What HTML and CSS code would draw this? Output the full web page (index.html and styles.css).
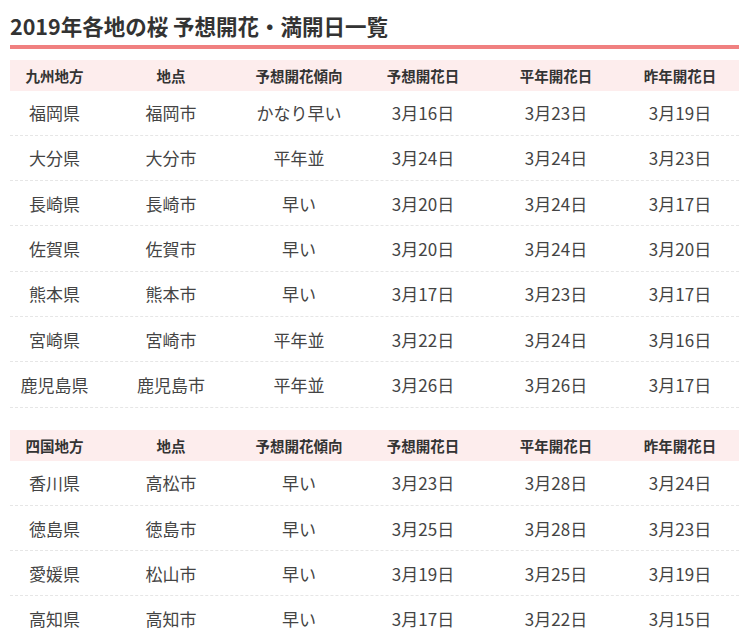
FILE: index.html
```html
<!DOCTYPE html>
<html lang="ja">
<head>
<meta charset="utf-8">
<link rel="stylesheet" href="styles.css">
</head>
<body>
<div class="page">
  <h2 class="title">2019年各地の桜 予想開花・満開日一覧</h2>

  <div class="grid">
    <div class="row head"><div>九州地方</div><div>地点</div><div>予想開花傾向</div><div>予想開花日</div><div>平年開花日</div><div>昨年開花日</div></div>
    <div class="row"><div>福岡県</div><div>福岡市</div><div>かなり早い</div><div>3月16日</div><div>3月23日</div><div>3月19日</div></div>
    <div class="row"><div>大分県</div><div>大分市</div><div>平年並</div><div>3月24日</div><div>3月24日</div><div>3月23日</div></div>
    <div class="row"><div>長崎県</div><div>長崎市</div><div>早い</div><div>3月20日</div><div>3月24日</div><div>3月17日</div></div>
    <div class="row"><div>佐賀県</div><div>佐賀市</div><div>早い</div><div>3月20日</div><div>3月24日</div><div>3月20日</div></div>
    <div class="row"><div>熊本県</div><div>熊本市</div><div>早い</div><div>3月17日</div><div>3月23日</div><div>3月17日</div></div>
    <div class="row"><div>宮崎県</div><div>宮崎市</div><div>平年並</div><div>3月22日</div><div>3月24日</div><div>3月16日</div></div>
    <div class="row"><div>鹿児島県</div><div>鹿児島市</div><div>平年並</div><div>3月26日</div><div>3月26日</div><div>3月17日</div></div>
  </div>

  <div class="grid second">
    <div class="row head"><div>四国地方</div><div>地点</div><div>予想開花傾向</div><div>予想開花日</div><div>平年開花日</div><div>昨年開花日</div></div>
    <div class="row"><div>香川県</div><div>高松市</div><div>早い</div><div>3月23日</div><div>3月28日</div><div>3月24日</div></div>
    <div class="row"><div>徳島県</div><div>徳島市</div><div>早い</div><div>3月25日</div><div>3月28日</div><div>3月23日</div></div>
    <div class="row"><div>愛媛県</div><div>松山市</div><div>早い</div><div>3月19日</div><div>3月25日</div><div>3月19日</div></div>
    <div class="row"><div>高知県</div><div>高知市</div><div>早い</div><div>3月17日</div><div>3月22日</div><div>3月15日</div></div>
  </div>
</div>
</body>
</html>
```
FILE: styles.css
```css
html, body {
  margin: 0;
  padding: 0;
  background: #fff;
}
body {
  font-family: "Noto Sans CJK JP", "Noto Sans", sans-serif;
  color: #444;
}
.page {
  width: 729px;
  padding-left: 10px;
  padding-top: 11px;
}
.title {
  margin: 0;
  font-size: 21.5px;
  line-height: 30px;
  font-weight: bold;
  color: #333;
  padding-bottom: 4px;
  border-bottom: 4px solid #f08080;
}
.grid {
  margin-top: 10.5px;
}
.grid.second {
  margin-top: 22px;
}
.row {
  display: grid;
  grid-template-columns: 89px 144px 112px 136px 130px 118px;
  height: 45.3px;
  box-sizing: border-box;
  border-bottom: 1px dashed #e6e6e6;
  align-items: center;
  text-align: center;
  font-size: 17px;
}
.row.head {
  height: 31px;
  background: #fdeded;
  border-bottom: none;
  font-size: 14.5px;
  font-weight: bold;
  color: #333;
}
```
